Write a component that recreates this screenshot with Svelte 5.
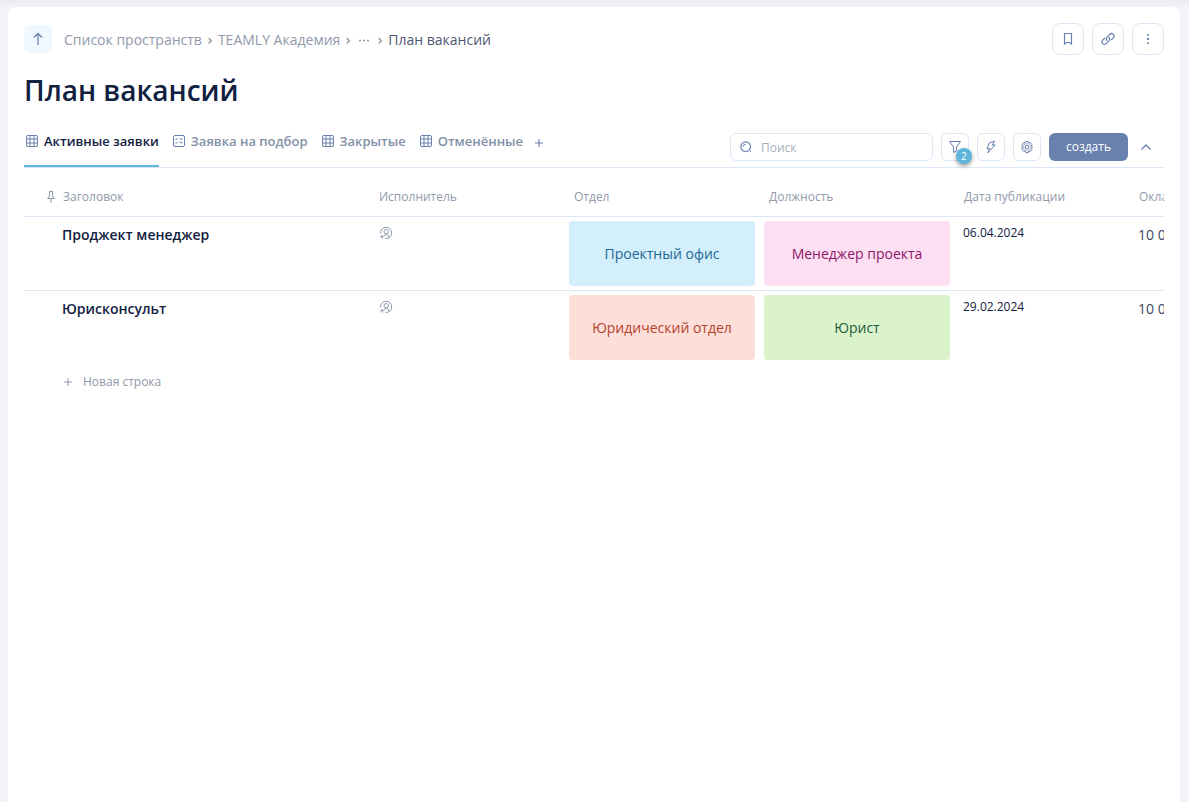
<script lang="ts">
    type Tag = { text: string; color: string };
    type Vacancy = { title: string; department: Tag; position: Tag; date: string; salary: string };

    const tabs = [
        { name: 'Активные заявки', icon: 'grid' },
        { name: 'Заявка на подбор', icon: 'form' },
        { name: 'Закрытые', icon: 'grid' },
        { name: 'Отменённые', icon: 'grid' }
    ];

    const vacancies: Vacancy[] = [
        {
            title: 'Проджект менеджер',
            department: { text: 'Проектный офис', color: 'blue' },
            position: { text: 'Менеджер проекта', color: 'pink' },
            date: '06.04.2024',
            salary: '10 000'
        },
        {
            title: 'Юрисконсульт',
            department: { text: 'Юридический отдел', color: 'red' },
            position: { text: 'Юрист', color: 'green' },
            date: '29.02.2024',
            salary: '10 000'
        }
    ];

    let active = $state(0);
    let search = $state('');
</script>

{#snippet separator()}
    <svg class="separator" width="6" height="10" viewBox="0 0 6 10"><path d="M1.500 3 4.500 5.800 1.500 8.600" /></svg>
{/snippet}

<main class="page">
    <header class="top">
        <button class="up" aria-label="На уровень выше">
            <svg width="16" height="16" viewBox="0 0 16 16"><path d="M8 14V2.500M4 6.500l4-4 4 4" stroke-width="1.300" /></svg>
        </button>
        <nav class="crumbs">
            <a href="#spaces">Список пространств</a>
            {@render separator()}
            <a href="#academy">TEAMLY Академия</a>
            {@render separator()}
            <button class="more" aria-label="Ещё">
                <svg width="12" height="10" viewBox="0 0 12 10"><path d="M1 5.500h2M5 5.500h2M9 5.500h2" stroke-width="1.300" /></svg>
            </button>
            {@render separator()}
            <span class="current">План вакансий</span>
        </nav>
        <div class="actions">
            <button class="square large" aria-label="В закладки">
                <svg width="16" height="16" viewBox="0 0 16 16"><path d="M4.500 2.500h7v10.500L9.500 11.500h-3L4.500 13z" stroke-width="1.200" /></svg>
            </button>
            <button class="square large" aria-label="Скопировать ссылку">
                <svg width="16" height="16" viewBox="0 0 16 16"><path d="M7.200 9.700A2.500 2.500 0 0 1 7 6.200l2.800-2.800a2.400 2.400 0 0 1 3.500 3.400l-2.200 2.300M8.800 6.300A2.500 2.500 0 0 1 9 9.800l-2.800 2.800a2.400 2.400 0 0 1-3.500-3.400l2.200-2.300" stroke-width="1.200" /></svg>
            </button>
            <button class="square large" aria-label="Меню">
                <svg class="filled" width="16" height="16" viewBox="0 0 16 16"><path d="M7 3h2v1.500H7zM7 7h2v2H7zM7 11.500h2V13H7z" /></svg>
            </button>
        </div>
    </header>

    <h1>План вакансий</h1>

    <div class="bar">
        <div class="tabs">
            {#each tabs as tab, i}
                <button class="tab" class:active={active === i} onclick={() => (active = i)}>
                    {#if tab.icon === 'grid'}
                        <svg width="12" height="12" viewBox="0 0 12 12"><rect x="0.500" y="0.500" width="11" height="11" rx="1.500" /><path d="M4 .5v11M8 .5v11M.5 4h11M.5 8h11" /></svg>
                    {:else}
                        <svg width="12" height="12" viewBox="0 0 12 12"><rect x="0.500" y="0.500" width="11" height="11" rx="1.500" /><path d="M2.300 4l.8.800L4.700 3M6.500 4h3M2.300 7.700l.8.800 1.600-1.800M6.500 7.700h3" /></svg>
                    {/if}
                    {tab.name}
                </button>
            {/each}
            <button class="add-tab" aria-label="Добавить представление">
                <svg width="8" height="8" viewBox="0 0 8 8"><path d="M4 0v8M0 4h8" stroke-width="1.200" /></svg>
            </button>
        </div>

        <div class="tools">
            <label class="search">
                <svg width="14" height="14" viewBox="0 0 14 14"><circle cx="6.700" cy="6.700" r="4.800" stroke-width="1.200" /><path d="M10.500 10.500l1.700 1.700M4.200 6.700a2.500 2.500 0 0 1 2.500-2.500" /></svg>
                <input type="text" placeholder="Поиск" aria-label="Поиск" bind:value={search} />
            </label>
            <button class="square" aria-label="Фильтры">
                <svg width="14" height="14" viewBox="0 0 14 14"><path d="M1.500 1.500h11L8.500 7v4l-3 1.500V7z" /></svg>
                <span class="badge">2</span>
            </button>
            <button class="square" aria-label="Автоматизации">
                <svg width="14" height="14" viewBox="0 0 14 14"><path d="M5 3.200 10.500 1 8.300 5.200l2.900-.4L3.800 12.800l1.900-4.300-2.700.5z" /></svg>
            </button>
            <button class="square" aria-label="Настройки">
                <svg width="14" height="14" viewBox="0 0 14 14"><path d="M5.700 1.500h2.600l.5 1.300 1.500-.2 1.700 2-.6 1.200 1.100 1.200-1.100 1.200.6 1.200-1.700 2-1.500-.2-.5 1.300H5.700l-.5-1.300-1.500.2-1.700-2 .6-1.200L1.500 7l1.100-1.200L2 4.600l1.700-2 1.500.2z" /><circle cx="7" cy="7" r="3.700" stroke-opacity="0.500" /><circle cx="7" cy="7" r="1.900" /></svg>
            </button>
            <button class="create">создать</button>
            <button class="collapse" aria-label="Свернуть">
                <svg width="12" height="8" viewBox="0 0 12 8"><path d="M1.500 6.500 6 2l4.500 4.500" stroke-width="1.300" /></svg>
            </button>
        </div>
    </div>

    <div class="table-wrap">
        <table>
            <colgroup>
                <col class="col-title" />
                <col class="col-wide" />
                <col class="col-wide" />
                <col class="col-wide" />
                <col class="col-narrow" />
                <col class="col-narrow" />
            </colgroup>
            <thead>
                <tr>
                    <th>
                        <div class="pinned">
                            <svg width="10" height="14" viewBox="0 0 10 14"><path d="M3 1.500h4M3.500 1.500v4.500L1.500 8.500h7l-2-2.500V1.500M5 8.500v4.500" /></svg>
                            Заголовок
                        </div>
                    </th>
                    <th>Исполнитель</th>
                    <th>Отдел</th>
                    <th>Должность</th>
                    <th>Дата публикации</th>
                    <th>Оклад</th>
                </tr>
            </thead>
            <tbody>
                {#each vacancies as vacancy}
                    <tr>
                        <td class="title">{vacancy.title}</td>
                        <td class="assignee">
                            <button aria-label="Назначить исполнителя">
                                <svg width="14" height="14" viewBox="0 0 14 14"><path d="M1.500 7.500A5.600 5.600 0 1 1 6.500 12.500M3 8.800v3.800M1.100 10.700h3.800M4.800 10a2.800 2.800 0 0 1 4.900 0v1.800" /><circle cx="7.200" cy="5.700" r="2.200" /></svg>
                            </button>
                        </td>
                        <td class="tag-cell"><div class="tag {vacancy.department.color}">{vacancy.department.text}</div></td>
                        <td class="tag-cell"><div class="tag {vacancy.position.color}">{vacancy.position.text}</div></td>
                        <td class="date">{vacancy.date}</td>
                        <td class="salary">{vacancy.salary}</td>
                    </tr>
                {/each}
            </tbody>
        </table>
    </div>

    <button class="new-row">
        <svg width="10" height="10" viewBox="0 0 10 10"><path d="M5 1v8M1 5h8" /></svg>
        Новая строка
    </button>
</main>

<style>
    :global(body) {
        background: linear-gradient(#ebecf0, #f3f4f9 8px);
        font-family: "Open Sans", "Noto Sans", sans-serif;
    }

    .page {
        box-sizing: border-box;
        min-height: calc(100vh - 7px);
        margin: 7px 9px 0 8px;
        padding: 16px;
        background: #fff;
        border-radius: 8px 8px 0 0;
        color: #12213f;
    }

    button {
        padding: 0;
        border: none;
        background: none;
        color: inherit;
        font: inherit;
        cursor: pointer;
    }

    svg {
        flex: none;
        fill: none;
        stroke: #6981af;
        stroke-width: 1;
    }

    svg.filled {
        fill: #6981af;
        stroke: none;
    }

    .top {
        display: flex;
        align-items: center;
    }

    .up {
        display: flex;
        align-items: center;
        justify-content: center;
        width: 28px;
        height: 28px;
        border-radius: 6px;
        background: #eff8ff;
    }

    .crumbs {
        display: flex;
        align-items: center;
        gap: 5px;
        margin-left: 12px;
        padding-top: 2px;
        font-size: 14px;
        line-height: 20px;
        color: #8f99ab;
    }

    .crumbs a {
        color: inherit;
        text-decoration: none;
    }

    .crumbs svg {
        stroke: #8f99ab;
    }

    .crumbs .separator {
        stroke-width: 1.3;
    }

    .more {
        display: flex;
        padding: 0 2px;
    }

    .current {
        color: #4c5872;
    }

    .actions {
        display: flex;
        gap: 8px;
        margin-left: auto;
    }

    .square {
        box-sizing: border-box;
        display: flex;
        align-items: center;
        justify-content: center;
        position: relative;
        width: 28px;
        height: 28px;
        border: 1px solid #dce6f6;
        border-radius: 6px;
    }

    .square.large {
        width: 32px;
        height: 32px;
        border-radius: 8px;
    }

    h1 {
        margin: 16px 0 24px;
        font-size: 28px;
        line-height: 38px;
        font-weight: 600;
    }

    .bar {
        display: flex;
        align-items: flex-end;
        justify-content: space-between;
        border-bottom: 1px solid #dce6f6;
    }

    .tabs {
        display: flex;
        gap: 12px;
    }

    .tab {
        display: flex;
        align-items: center;
        gap: 6px;
        padding: 0 0 16px 2px;
        border-bottom: 2px solid transparent;
        color: #8290a5;
        font-size: 13px;
        line-height: 16px;
        font-weight: 600;
    }

    .tab.active {
        border-bottom-color: #5fb6dd;
        color: #12213f;
    }

    .add-tab {
        display: flex;
        align-items: center;
        height: 20px;
    }

    .tools {
        display: flex;
        gap: 8px;
        padding-bottom: 6px;
    }

    .search {
        box-sizing: border-box;
        display: flex;
        align-items: center;
        gap: 8px;
        width: 203px;
        height: 28px;
        padding: 0 8px;
        border: 1px solid #dce6f6;
        border-radius: 6px;
    }

    .search input {
        min-width: 0;
        flex: 1;
        padding: 0;
        border: none;
        outline: none;
        color: inherit;
        font: inherit;
        font-size: 12px;
    }

    .search input::placeholder {
        color: #a5afbd;
    }

    .badge {
        position: absolute;
        right: -4px;
        bottom: -4px;
        width: 16px;
        height: 16px;
        border-radius: 50%;
        background: #5fb6dd;
        box-shadow: 0 2px 4px rgba(0, 0, 0, .4);
        color: #fff;
        font-size: 10px;
        line-height: 16px;
        text-align: center;
    }

    .create {
        height: 28px;
        padding: 0 17px 2px;
        border-radius: 6px;
        background: #6981af;
        color: #fff;
        font-size: 12px;
        font-weight: 500;
    }

    .collapse {
        display: flex;
        align-items: center;
        justify-content: center;
        width: 20px;
        margin-right: 8px;
    }

    .table-wrap {
        overflow-x: auto;
        scrollbar-width: none;
    }

    table {
        table-layout: fixed;
        width: 1281px;
        border-collapse: separate;
        border-spacing: 0;
    }

    .col-title {
        width: 346px;
    }

    .col-wide {
        width: 195px;
    }

    .col-narrow {
        width: 175px;
    }

    th {
        height: 49px;
        padding: 10px 9px 0;
        box-sizing: border-box;
        border-bottom: 1px solid #dce6f6;
        color: #8f99ab;
        font-size: 12px;
        line-height: 16px;
        font-weight: 400;
        text-align: left;
    }

    .pinned {
        display: flex;
        align-items: center;
        gap: 7px;
        padding-left: 13px;
    }

    .pinned svg,
    .assignee svg,
    .new-row svg {
        stroke: #8f99ab;
    }

    td {
        padding: 8px;
        font-size: 14px;
        line-height: 20px;
        vertical-align: top;
    }

    tbody tr:not(:last-child) td {
        border-bottom: 1px solid #dce6f6;
    }

    .title {
        padding-left: 38px;
        font-weight: 600;
    }

    .assignee button {
        display: flex;
        padding: 1px;
    }

    td.tag-cell {
        padding: 4px 5px 4px 4px;
    }

    .tag {
        display: flex;
        align-items: center;
        justify-content: center;
        height: 65px;
        border-radius: 4px;
    }

    .tag.blue {
        background: #d3effc;
        color: #1f6796;
    }

    .tag.pink {
        background: #fddff4;
        color: #8d1765;
    }

    .tag.red {
        background: #fdded9;
        color: #b4432c;
    }

    .tag.green {
        background: #daf3cb;
        color: #1f5c3c;
    }

    .date {
        font-size: 12px;
        line-height: 16px;
    }

    .salary {
        color: #3a4661;
    }

    .new-row {
        display: flex;
        align-items: center;
        gap: 10px;
        margin: 10px 0 0 39px;
        color: #8f99ab;
        font-size: 12px;
        line-height: 16px;
    }
</style>
